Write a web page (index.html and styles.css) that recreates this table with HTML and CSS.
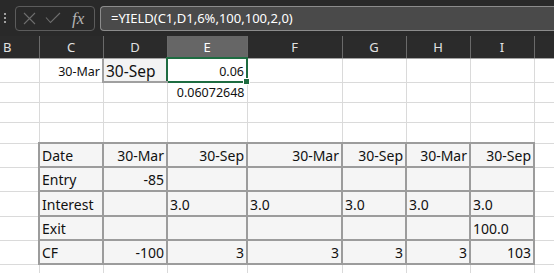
FILE: index.html
```html
<!DOCTYPE html>
<html lang="en">

<head>
  <meta charset="UTF-8">
  <meta name="viewport" content="width=device-width, initial-scale=1.0">
  <title>YIELD</title>
  <link rel="stylesheet" href="styles.css">
</head>

<body>
  <div class="formula-bar">
    <div class="grip"><i></i><i></i><i></i></div>
    <div class="fx-box">
      <svg class="icon-x" width="13" height="13" viewBox="0 0 13 13">
        <path d="M1 1L12 12M12 1L1 12" />
      </svg>
      <svg class="icon-check" width="16" height="12" viewBox="0 0 16 12">
        <path d="M1 5.5L5.5 10.5L15 1" />
      </svg>
      <span class="fx">fx</span>
    </div>
    <div class="formula-input">=YIELD(C1,D1,6%,100,100,2,0)</div>
  </div>

  <div class="sheet-wrap">
    <table class="sheet">
      <colgroup>
        <col class="col-b">
        <col class="col-std">
        <col class="col-std">
        <col class="col-e">
        <col class="col-f">
        <col class="col-std">
        <col class="col-std">
        <col class="col-std">
        <col class="col-std">
      </colgroup>
      <thead>
        <tr>
          <th class="head-b">B</th>
          <th>C</th>
          <th>D</th>
          <th class="sel">E</th>
          <th>F</th>
          <th>G</th>
          <th>H</th>
          <th>I</th>
          <th></th>
        </tr>
      </thead>
      <tbody>
        <tr class="row-1">
          <td></td>
          <td class="r">30-Mar</td>
          <td class="d1">30-Sep</td>
          <td class="r active">0.06<span class="handle"></span></td>
          <td></td><td></td><td></td><td></td><td></td>
        </tr>
        <tr class="row-s">
          <td></td><td></td><td></td>
          <td class="r">0.06072648</td>
          <td></td><td></td><td></td><td></td><td></td>
        </tr>
        <tr class="row-s">
          <td></td><td></td><td></td><td></td><td></td><td></td><td></td><td></td><td></td>
        </tr>
        <tr class="row-s">
          <td></td><td></td><td></td><td></td><td></td><td></td><td></td><td></td><td></td>
        </tr>

        <!-- cash flow table -->
        <tr class="row-t">
          <td></td>
          <td class="box">Date</td>
          <td class="box r">30-Mar</td>
          <td class="box r">30-Sep</td>
          <td class="box r">30-Mar</td>
          <td class="box r">30-Sep</td>
          <td class="box r">30-Mar</td>
          <td class="box r">30-Sep</td>
          <td></td>
        </tr>
        <tr class="row-t">
          <td></td>
          <td class="box">Entry</td>
          <td class="box r">-85</td>
          <td class="box"></td><td class="box"></td><td class="box"></td><td class="box"></td><td class="box"></td>
          <td></td>
        </tr>
        <tr class="row-t tall">
          <td></td>
          <td class="box">Interest</td>
          <td class="box"></td>
          <td class="box">3.0</td>
          <td class="box">3.0</td>
          <td class="box">3.0</td>
          <td class="box">3.0</td>
          <td class="box">3.0</td>
          <td></td>
        </tr>
        <tr class="row-t">
          <td></td>
          <td class="box">Exit</td>
          <td class="box"></td><td class="box"></td><td class="box"></td><td class="box"></td><td class="box"></td>
          <td class="box">100.0</td>
          <td></td>
        </tr>
        <tr class="row-t">
          <td></td>
          <td class="box">CF</td>
          <td class="box r">-100</td>
          <td class="box r">3</td>
          <td class="box r">3</td>
          <td class="box r">3</td>
          <td class="box r">3</td>
          <td class="box r">103</td>
          <td></td>
        </tr>
        <tr class="row-t">
          <td></td><td></td><td></td><td></td><td></td><td></td><td></td><td></td><td></td>
        </tr>
      </tbody>
    </table>
  </div>
</body>

</html>
```

FILE: styles.css
```css
body {
  margin: 0;
  padding: 0;
  background-color: #ffffff;
  color: #000000;
  font-family: "Noto Sans", sans-serif;
  overflow: hidden;
}

/* formula bar */
.formula-bar {
  height: 36px;
  background-color: #292929;
  display: flex;
  align-items: center;
}

.grip {
  width: 2px;
  margin-left: 4px;
  display: flex;
  flex-direction: column;
  gap: 2px;
}

.grip i {
  display: block;
  width: 2px;
  height: 2px;
  background-color: #a0a0a0;
}

.fx-box {
  margin-left: 9px;
  width: 71px;
  height: 23px;
  border: 1px solid #5c5c5c;
  border-radius: 4px;
  display: flex;
  align-items: center;
  padding-left: 7px;
  box-sizing: content-box;
}

.fx-box svg path {
  fill: none;
  stroke: #6e6e6e;
  stroke-width: 1.1;
}

.icon-check {
  margin-left: 9px;
}

.fx {
  margin-left: 11px;
  font-family: "Liberation Serif", serif;
  font-style: italic;
  font-size: 17px;
  color: #b4b4b4;
  line-height: 1;
}

.formula-input {
  flex: 1;
  margin-left: 5px;
  height: 23px;
  line-height: 23px;
  background-color: #4a4a4a;
  border: 1px solid #8c8c8c;
  border-right: none;
  border-radius: 4px 0 0 4px;
  padding-left: 10px;
  color: #ffffff;
  font-size: 13px;
}

/* grid */
.sheet-wrap {
  width: 554px;
  overflow: hidden;
}

.sheet {
  border-collapse: collapse;
  table-layout: fixed;
  width: 597px;
}

.col-b { width: 39px; }
.col-std { width: 64px; }
.col-e { width: 80px; }
.col-f { width: 95px; }

.sheet th {
  height: 21px;
  padding: 0;
  background-color: #2b2b2b;
  color: #e2e2e2;
  font-weight: normal;
  font-size: 13px;
  text-align: center;
  border-right: 1px solid #6a6a6a;
  border-bottom: 1px solid #a3a3a3;
}

.sheet th.head-b {
  text-align: left;
  padding-left: 3px;
}

.sheet th.sel {
  background-color: #666666;
  color: #ffffff;
}

.sheet td {
  padding: 0 2px 3px 2px;
  border-right: 1px solid #dadada;
  border-bottom: 1px solid #dadada;
  font-size: 12.5px;
  line-height: 1;
  vertical-align: bottom;
  white-space: nowrap;
  color: #111111;
}

.sheet td.r {
  text-align: right;
}

.row-1 td { height: 19px; }
.row-s td { height: 16px; }
.row-t td { height: 19px; }
.row-t.tall td { height: 20px; }

.sheet td.d1 {
  background-color: #f3f3f3;
  border-left: 2px solid #a0a0a0;
  border-bottom: 2px solid #a0a0a0;
  font-size: 15.5px;
  padding-bottom: 2px;
}

.sheet td.active {
  position: relative;
  border: 2px solid #1e6c41;
}

.handle {
  position: absolute;
  right: -4px;
  bottom: -4px;
  width: 5px;
  height: 5px;
  background-color: #1e6c41;
  border: 1px solid #ffffff;
}

.sheet td.box {
  background-color: #f5f5f5;
  border: 2px solid #9c9c9c;
  font-size: 14px;
}
```
